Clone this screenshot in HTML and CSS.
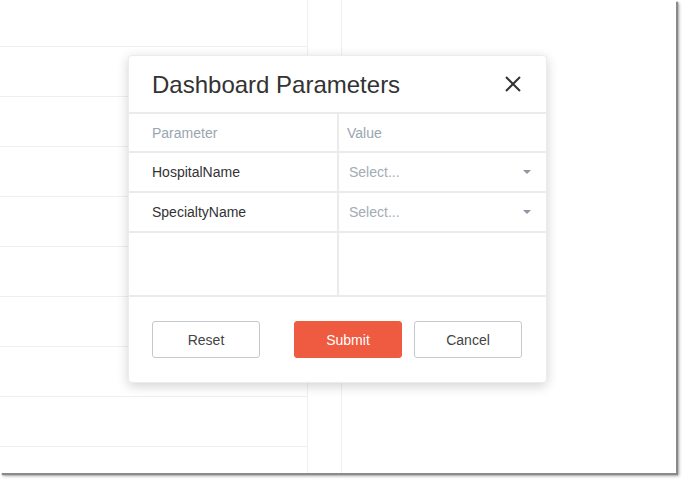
FILE: index.html
```html
<!DOCTYPE html>
<html>
<head>
<meta charset="utf-8">
<title>Dashboard Parameters</title>
<link rel="stylesheet" href="styles.css">
</head>
<body>
<div class="window">
  <div class="bg">
    <div class="panel">
      <div class="prow first"></div>
      <div class="prow"></div>
      <div class="prow"></div>
      <div class="prow"></div>
      <div class="prow"></div>
      <div class="prow"></div>
      <div class="prow"></div>
      <div class="prow"></div>
      <div class="prow"></div>
    </div>
    <div class="strip"></div>
    <div class="rest"></div>
  </div>

  <div class="dialog">
    <div class="dlg-header">
      <h1 class="dlg-title">Dashboard Parameters</h1>
      <button class="close" aria-label="Close">
        <svg width="16" height="16" viewBox="0 0 16 16"><path d="M1 1 L15 15 M15 1 L1 15" stroke="#333" stroke-width="2" fill="none"/></svg>
      </button>
    </div>
    <div class="table">
      <div class="trow thead">
        <div class="cell c1">Parameter</div>
        <div class="cell c2 hv">Value</div>
      </div>
      <div class="trow">
        <div class="cell c1">HospitalName</div>
        <div class="cell c2"><div class="select"><span>Select...</span><span class="caret"></span></div></div>
      </div>
      <div class="trow">
        <div class="cell c1">SpecialtyName</div>
        <div class="cell c2"><div class="select"><span>Select...</span><span class="caret"></span></div></div>
      </div>
      <div class="trow empty">
        <div class="cell c1"></div>
        <div class="cell c2"></div>
      </div>
    </div>
    <div class="dlg-footer">
      <button class="btn">Reset</button>
      <div class="right">
        <button class="btn primary">Submit</button>
        <button class="btn">Cancel</button>
      </div>
    </div>
  </div>
</div>
</body>
</html>
```

FILE: styles.css
```css
html, body {
  margin: 0;
  padding: 0;
  background: #fff;
}
body {
  font-family: "Liberation Sans", Arial, sans-serif;
  width: 688px;
  height: 486px;
  overflow: hidden;
}
.window {
  position: relative;
  width: 676px;
  height: 473px;
  background: #fff;
  box-shadow: 2px 2px 1px #8a8a8a, 3px 3px 3px rgba(0,0,0,0.35);
}
.bg {
  display: flex;
  height: 100%;
}
.panel {
  width: 307px;
  border-right: 1px solid #f0f0f0;
  display: flex;
  flex-direction: column;
}
.prow {
  height: 49px;
  border-bottom: 1px solid #efefef;
  flex: none;
}
.prow.first {
  height: 46px;
}
.strip {
  width: 33px;
  border-right: 1px solid #f0f0f0;
}
.rest {
  flex: 1;
}

.dialog {
  position: absolute;
  left: 128px;
  top: 55px;
  width: 419px;
  height: 328px;
  box-sizing: border-box;
  background: #fff;
  border-radius: 4px;
  border: 1px solid #ececec;
  box-shadow: 0 3px 12px rgba(0,0,0,0.18);
  display: flex;
  flex-direction: column;
}
.dlg-header {
  height: 56px;
  display: flex;
  align-items: center;
  justify-content: space-between;
  padding: 0 25px 0 23px;
  border-bottom: 2px solid #ebebeb;
  flex: none;
}
.dlg-title {
  margin: 0;
  font-size: 24px;
  font-weight: normal;
  color: #333;
  padding-top: 2px;
}
.close {
  background: none;
  border: 0;
  padding: 0;
  width: 16px;
  height: 16px;
  display: flex;
}
.table {
  display: flex;
  flex-direction: column;
  flex: none;
}
.trow {
  display: flex;
  height: 38px;
  border-bottom: 2px solid #ebebeb;
}
.trow.thead {
  height: 37px;
}
.trow.empty {
  height: 62px;
}
.cell {
  display: flex;
  align-items: center;
  font-size: 14px;
  color: #333;
}
.c1 {
  width: 210px;
  padding-left: 23px;
  box-sizing: border-box;
  border-right: 2px solid #ebebeb;
}
.c2 {
  flex: 1;
  padding-left: 8px;
}
.thead .cell {
  color: #9aa5b1;
}
.select {
  flex: 1;
  display: flex;
  align-items: center;
  justify-content: space-between;
  padding: 0 15px 0 2px;
  color: #a3abb5;
}
.caret {
  width: 0;
  height: 0;
  border-left: 4px solid transparent;
  border-right: 4px solid transparent;
  border-top: 4px solid #8d97a3;
}
.dlg-footer {
  flex: 1;
  display: flex;
  align-items: center;
  justify-content: space-between;
  padding: 0 24px 0 23px;
}
.right {
  display: flex;
  gap: 12px;
}
.btn {
  width: 108px;
  height: 37px;
  box-sizing: border-box;
  border: 1px solid #c4c9cf;
  border-radius: 3px;
  background: #fff;
  color: #444;
  font-family: "Liberation Sans", Arial, sans-serif;
  font-size: 14px;
  padding: 0;
}
.btn.primary {
  background: #ef5b40;
  border-color: #ef5b40;
  color: #fff;
}
```
